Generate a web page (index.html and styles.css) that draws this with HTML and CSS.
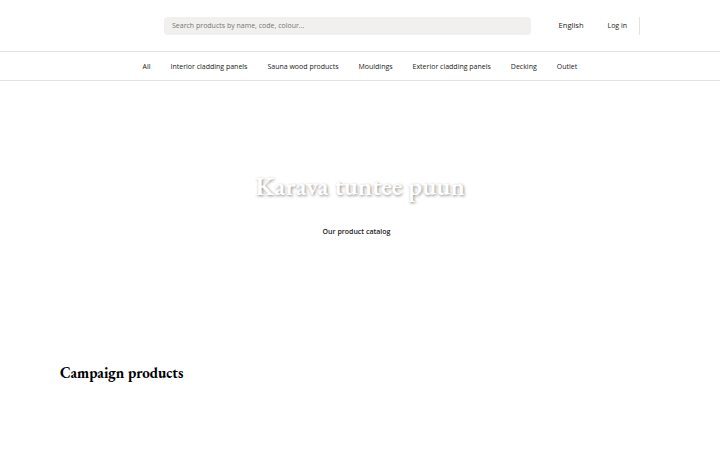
FILE: index.html
```html
<!DOCTYPE html>
<html lang="en">
<head>
  <meta charset="UTF-8">
  <meta name="viewport" content="width=device-width, initial-scale=1.0">
  <title>Karava</title>
  <link rel="stylesheet" href="styles.css">
</head>
<body>
  <header class="header">
    <input class="search" type="text" placeholder="Search products by name, code, colour...">
    <a href="#" class="lang">English</a>
    <a href="#" class="login">Log in</a>
  </header>

  <nav class="nav">
    <a href="#">All</a>
    <a href="#">Interior cladding panels</a>
    <a href="#">Sauna wood products</a>
    <a href="#">Mouldings</a>
    <a href="#">Exterior cladding panels</a>
    <a href="#">Decking</a>
    <a href="#">Outlet</a>
  </nav>

  <section class="hero">
    <h1 class="hero-title">Karava tuntee puun</h1>
    <a href="#" class="hero-link">Our product catalog</a>
  </section>

  <section class="campaign">
    <h2 class="campaign-title">Campaign products</h2>
  </section>
</body>
</html>
```

FILE: styles.css
```css
* {
  box-sizing: border-box;
}

body {
  margin: 0;
  height: 450px;
  overflow: hidden;
  background-color: #fff;
  color: #1a1a1a;
  font-family: "Open Sans", sans-serif;
  font-size: 7px;
}

a {
  color: inherit;
  text-decoration: none;
  white-space: nowrap;
}

.header {
  display: flex;
  align-items: center;
  height: 52px;
  padding-left: 164px;
  border-bottom: 1px solid #e3e3e3;
}

.search {
  width: 367px;
  height: 18px;
  padding: 0 8px;
  border: 0;
  border-radius: 4px;
  background-color: #f1f0ee;
  font-family: inherit;
  font-size: 7px;
}

.search::placeholder {
  color: #757575;
}

.lang {
  margin: -2px 0 0 27.5px;
  width: 49px;
  font-size: 7.6px;
  line-height: 10px;
}

.login {
  width: 32.5px;
  height: 18px;
  line-height: 18px;
  border-right: 1px solid #e3e3e3;
}

.nav {
  display: flex;
  align-items: center;
  gap: 20px;
  height: 29px;
  padding-left: 142.5px;
  border-bottom: 1px solid #e3e3e3;
}

.hero {
  height: 270px;
  padding-top: 87px;
  text-align: center;
}

.hero-title {
  margin: 0;
  height: 36px;
  line-height: 36px;
  font-family: "EB Garamond", "Liberation Serif", serif;
  font-size: 26px;
  font-weight: 600;
  color: #fff;
  text-shadow: 1px 1px 3px rgba(0, 0, 0, 0.45);
}

.hero-link {
  display: block;
  margin: 23px 7px 0 0;
  line-height: 10px;
  font-weight: 600;
}

.campaign {
  padding: 12px 60px;
}

.campaign-title {
  margin: 0;
  line-height: 20px;
  font-family: "EB Garamond", "Liberation Serif", serif;
  font-size: 15px;
  color: #000;
}
```
